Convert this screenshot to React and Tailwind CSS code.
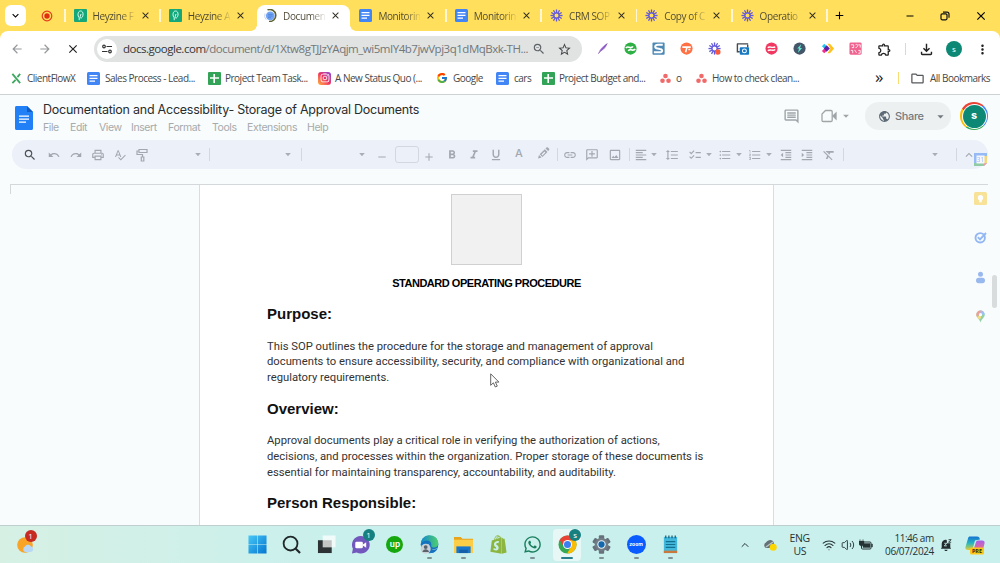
import React from 'react';
import {
    MdSearch, MdUndo, MdRedo, MdOutlinePrint, MdSpellcheck, MdAdd, MdRemove, MdFormatBold, MdFormatItalic,
    MdFormatUnderlined, MdLink, MdOutlineAddComment, MdOutlineImage, MdFormatAlignLeft, MdFormatLineSpacing,
    MdChecklist, MdFormatListBulleted, MdFormatListNumbered, MdFormatIndentDecrease, MdFormatIndentIncrease,
    MdFormatClear, MdArrowDropDown, MdKeyboardArrowUp, MdOutlineComment, MdPublic, MdArrowBack, MdArrowForward,
    MdClose, MdStarBorder, MdOutlineZoomOut, MdMoreVert, MdOutlineExtension, MdOutlineFileDownload,
    MdKeyboardArrowDown, MdOutlineFolder
} from 'react-icons/md';
import { FaInstagram, FaShopify, FaWhatsapp } from 'react-icons/fa';
import { FcGoogle } from 'react-icons/fc';
import { ChevronUp, Wifi, Volume2 } from 'lucide-react';

const DocsIcon = ({ className }) => (
    <svg viewBox="0 0 13 13" className={className}>
        <rect width="13" height="13" rx="1.5" fill="#4285f4" />
        <path d="M2.5 3.7h8M2.5 6.4h8M2.5 9.1h5.5" stroke="#fff" strokeWidth="1.3" />
    </svg>
);

const SheetsIcon = ({ className }) => (
    <svg viewBox="0 0 13 13" className={className}>
        <rect width="13" height="13" rx="1" fill="#33a457" />
        <path d="M2 6h9M6.2 2v9" stroke="#fff" strokeWidth="1.6" />
    </svg>
);

const HeyzineIcon = () => (
    <svg viewBox="0 0 13 13" className="size-[13px]">
        <rect width="13" height="13" rx="1" fill="#13a77a" />
        <path d="M5.2 11.2V8.7C3.4 7.2 3.5 2 6.6 2c3.2 0 3 5.6.9 6.9-.9.5-1.5 0-1.3-1.2L7 5" fill="none" stroke="#d8fff1" strokeWidth="1" />
    </svg>
);

const LoadingIcon = () => (
    <svg viewBox="0 0 13 13" className="size-[13px]">
        <circle cx="6.3" cy="6.8" r="4.4" fill="#72a4f3" />
        <path d="M4 5.4h4.6M4 7h4.6M4 8.6h3" stroke="#4a7fda" strokeWidth=".8" />
        <path d="M3.500.9A6 6 0 1 1 5 12.4" fill="none" stroke="#5c6130" strokeWidth="1.5" />
        <path d="M1 4.500A6 6 0 0 0 2.2 10.7" fill="none" stroke="#c8d4e8" strokeWidth="1" />
    </svg>
);

// Burst of twelve short rays, used by the Loom tabs and extension
const BurstIcon = ({ dot }) => (
    <svg viewBox="0 0 14 14" className="size-[13px]">
        {[0, 30, 60, 90, 120, 150, 180, 210, 240, 270, 300, 330].map(a => (
            <path key={a} d="M7 .5v4" stroke="#6258dc" strokeWidth="1.4" transform={`rotate(${a} 7 7)`} />
        ))}
        <circle cx="7" cy="7" r="2.8" fill="none" stroke="#6258dc" strokeWidth="1.2" />
        {dot && <circle cx="10.5" cy="10.7" r="2.9" fill="#f75b3b" />}
    </svg>
);

const AsanaIcon = () => (
    <svg viewBox="0 0 11 11" className="size-[11px]">
        <circle cx="5.5" cy="3" r="2.3" fill="#f06a6a" />
        <circle cx="2.5" cy="7.8" r="2.3" fill="#f06a6a" />
        <circle cx="8.5" cy="7.8" r="2.3" fill="#f06a6a" />
    </svg>
);

const tabs = [
    { icon: <HeyzineIcon />, title: 'Heyzine F' },
    { icon: <HeyzineIcon />, title: 'Heyzine A' },
    { icon: <LoadingIcon />, title: 'Documen', active: true },
    { icon: <DocsIcon className="size-[13px]" />, title: 'Monitorin' },
    { icon: <DocsIcon className="size-[13px]" />, title: 'Monitorin' },
    { icon: <BurstIcon />, title: 'CRM SOP' },
    { icon: <BurstIcon />, title: 'Copy of C' },
    { icon: <BurstIcon />, title: 'Operatio' }
];

function Tab({ icon, title, active, hideLine }) {
    return (
        <div className="relative flex h-[31px] w-[95.3px] shrink-0 items-center">
            {active && (
                <div className="absolute top-[5px] -right-[0.5px] bottom-0 left-[2.5px] rounded-t-lg bg-white">
                    <div className="absolute bottom-0 -left-1.5 size-1.5 bg-[radial-gradient(circle_at_0_0,#ffdf5c_5.5px,#fff_6px)]" />
                    <div className="absolute -right-1.5 bottom-0 size-1.5 bg-[radial-gradient(circle_at_100%_0,#ffdf5c_5.5px,#fff_6px)]" />
                </div>
            )}
            <div className={`h-[13px] w-[1.5px] ${hideLine ? '' : 'bg-[#fff6d5]'}`} />
            <div className="relative ml-2 w-[13px]">{icon}</div>
            <div className="relative ml-1.5 w-[42px] bg-linear-to-r from-[#4b4632] from-65% to-[#4b4632]/10 bg-clip-text pt-px text-[10px] tracking-[-0.4px] whitespace-nowrap text-transparent">
                {title}
            </div>
            <MdClose className="relative ml-[5px] size-[11px] text-[#2d2a1e]" />
        </div>
    );
}

function TabStrip() {
    return (
        <div className="flex h-[31px] items-center bg-[#ffdf5c]">
            <div className="ml-[5px] flex size-[21px] items-center justify-center rounded-md bg-white">
                <MdKeyboardArrowDown className="size-[13px]" />
            </div>
            <svg viewBox="0 0 12 12" className="ml-[15px] size-3">
                <circle cx="6" cy="6" r="4.8" fill="none" stroke="#e43d1c" strokeWidth="1.2" />
                <circle cx="6" cy="6" r="2.7" fill="#e02f12" />
            </svg>
            <div className="ml-[11px] flex">
                {tabs.map((tab, i) => (
                    <Tab key={i} {...tab} hideLine={i === 2 || i === 3} />
                ))}
            </div>
            <div className="h-[13px] w-[1.5px] bg-[#fff6d5]" />
            <MdAdd className="ml-[5px] size-[13px]" />
            <MdRemove className="ml-[58px] size-3" />
            <svg viewBox="0 0 10 10" className="ml-[24px] size-[10px]" fill="none" stroke="#111" strokeWidth="1.2">
                <rect x="1" y="2.8" width="6" height="6" rx="1.2" />
                <path d="M3 1.2h4c1.2 0 2 .8 2 2v3.6" />
            </svg>
            <MdClose className="ml-[24px] size-[14px]" />
        </div>
    );
}

const extensions = [
    <svg viewBox="0 0 14 14"><path d="M2.5 12.2C3.5 8 8 3.5 12 1.5c0 3-4 7.5-8 8.7z" fill="#a87bd8" /><path d="M2.5 12.5 12 1.5" stroke="#7042a8" strokeWidth=".8" /></svg>,
    <svg viewBox="0 0 14 14"><circle cx="7" cy="7" r="6.5" fill="#2fb045" /><path d="M2 6.5c2-3.6 5 2 7.5-1.8M4.5 9.5c2.5-3.7 5 1.5 7.5-2" fill="none" stroke="#fff" strokeWidth="1.7" /></svg>,
    <svg viewBox="0 0 14 14"><rect x=".5" y=".5" width="13" height="13" rx="1" fill="#4e89b5" /><path d="M11.5 3h-5C2.5 3 2.5 6.5 6 7l2.5.5C12 8 11.500 11 8 11H2" fill="none" stroke="#fff" strokeWidth="2.1" /></svg>,
    <svg viewBox="0 0 14 14"><circle cx="7" cy="7" r="6.5" fill="#ff7145" /><path d="M2.5 5.5h9M7.5 5.5 6 11M9 8h2" fill="none" stroke="#fff" strokeWidth="1.7" /></svg>,
    <BurstIcon dot />,
    <svg viewBox="0 0 14 14"><path d="M1 2h12M1.5 2v8.5H4M12.5 3v3" fill="none" stroke="#454b50" strokeWidth="1.5" /><rect x="4" y="5.5" width="10" height="8" rx="1" fill="#1678c2" /><circle cx="9" cy="9.5" r="2.1" fill="none" stroke="#fff" strokeWidth="1.1" /></svg>,
    <svg viewBox="0 0 14 14"><circle cx="7" cy="7" r="6.5" fill="#f23860" /><path d="M3 6.2c2-2.5 4 1 8-1M3 9.2c3-2 5 1 8-1.2" fill="none" stroke="#fff" strokeWidth="1.5" /></svg>,
    <svg viewBox="0 0 14 14"><circle cx="7" cy="7" r="6.5" fill="#45566b" /><path d="M8.8 2.5 4.5 7h2l-1.2 4.5 4.4-5H7.500z" fill="#5eead4" /></svg>,
    <svg viewBox="0 0 14 14"><path d="M1 4.5 3.5 2 6 4.5 3.5 7z" fill="#22c7ee" /><path d="M1 9.5 3.5 7 6 9.5 3.5 12z" fill="#f52c8b" /><path d="M7 2h2.5L14 7l-4.500 5H7l3-5z" fill="#ffc21c" /><path d="M6 3.5 9.500 7 6 10.5 3 7z" fill="#5b1fa8" /></svg>,
    <svg viewBox="0 0 14 14"><rect x=".5" y=".5" width="13" height="13" rx="1.5" fill="#f0628f" /><path d="M2 3h3v3H3M7 3c3-2 3 3 0 3M10 3h2v3M2 9h2v3M6 8.5l2 3M10 9h2v3h-2" fill="none" stroke="#fff" strokeWidth=".9" /></svg>
];

function AddressBar() {
    return (
        <div className="relative flex h-9 items-center rounded-t-lg bg-white">
            <MdArrowBack className="ml-[10px] size-[14px] text-[#96999b]" />
            <MdArrowForward className="ml-[14px] size-[14px] text-[#96999b]" />
            <MdClose className="ml-[14px] size-[14px] text-[#222]" />
            <div className="ml-[14px] flex h-[26px] w-[488px] items-center rounded-full bg-[#e0e3e2]">
                <div className="ml-[3px] flex size-5 items-center justify-center rounded-full bg-white">
                    <svg viewBox="0 0 12 12" className="size-3" fill="none" stroke="#333" strokeWidth="1.2">
                        <circle cx="3" cy="3.5" r="1.3" />
                        <path d="M5.5 3.5H11M1 8.5h5.5" />
                        <circle cx="9" cy="8.5" r="1.3" />
                    </svg>
                </div>
                <div className="w-[415px] pl-1.5 text-[11.5px] tracking-[-0.48px] whitespace-nowrap text-[#72777a]">
                    <span className="text-[#333638]">docs.google.com</span>/document/d/1Xtw8gTJJzYAqjm_wi5mIY4b7jwVpj3q1dMqBxk-TH...
                </div>
                <MdOutlineZoomOut className="size-[14px] text-[#5f6368]" />
                <MdStarBorder className="ml-[11px] size-[15px] text-[#44474a]" />
            </div>
            <div className="ml-[14px] flex gap-[15px] [&_svg]:size-[13.1px]">
                {extensions.map((ext, i) => <div key={i} className="w-[13.1px]">{ext}</div>)}
            </div>
            <MdOutlineExtension className="ml-[15px] size-[15px] text-[#222]" />
            <div className="ml-[13px] h-[12px] w-px bg-[#f7dc72]" />
            <MdOutlineFileDownload className="ml-3 size-[17px] text-[#222]" />
            <div className="ml-[11px] flex size-4 items-center justify-center rounded-full bg-[#0c8874] text-[8px] text-white">s</div>
            <MdMoreVert className="ml-[13px] size-[15px] text-[#222]" />
        </div>
    );
}

function Bookmark({ className, label, children, text }) {
    return (
        <div className={`flex shrink-0 items-center ${className}`}>
            {children}
            <span className={`whitespace-nowrap ${text}`}>{label}</span>
        </div>
    );
}

function BookmarksBar() {
    return (
        <div className="flex h-7 items-start border-b border-[#cdd2d2] bg-white pl-[11px] text-[10px] tracking-[-0.5px] text-[#45484a]">
            <div className="flex h-[22px] items-center">
                <Bookmark className="w-[76px]" text="ml-[5px]" label="ClientFlowX">
                    <svg viewBox="0 0 11 12" className="size-[11px]"><path d="m1 1 8.5 10M9.5 1l-3 3.5M4.500 7.500 1 11" stroke="#40a862" strokeWidth="2" /></svg>
                </Bookmark>
                <Bookmark className="w-[121px]" text="ml-[5px]" label="Sales Process - Lead..."><DocsIcon className="size-[13px]" /></Bookmark>
                <Bookmark className="w-[110px]" text="ml-1" label="Project Team Task..."><SheetsIcon className="size-[13px]" /></Bookmark>
                <Bookmark className="w-[118px]" text="ml-1" label="A New Status Quo (...">
                    <span className="rounded-[3px] bg-linear-to-tr from-[#ffb02e] via-[#ef2f62] to-[#8b32d9] p-[1.5px] text-white"><FaInstagram className="size-[10px]" /></span>
                </Bookmark>
                <Bookmark className="w-[60px]" text="ml-[5px]" label="Google"><FcGoogle className="size-[12px]" /></Bookmark>
                <Bookmark className="w-[46px]" text="ml-[5px]" label="cars"><DocsIcon className="size-[13px]" /></Bookmark>
                <Bookmark className="w-[118px]" text="ml-1" label="Project Budget and..."><SheetsIcon className="size-[13px]" /></Bookmark>
                <Bookmark className="w-[36px]" text="ml-[5px]" label="o"><AsanaIcon /></Bookmark>
                <Bookmark className="w-[179px]" text="ml-[5px]" label="How to check clean..."><AsanaIcon /></Bookmark>
                <span className="w-[23px] pb-[3px] text-[17px] leading-none text-[#222]">»</span>
                <div className="h-3 w-px bg-[#f7dc72]" />
                <MdOutlineFolder className="ml-[11px] size-[15px] text-[#55585a]" />
                <span className="ml-[5px] whitespace-nowrap">All Bookmarks</span>
            </div>
        </div>
    );
}

function Avatar() {
    return (
        <div className="flex size-[28px] items-center justify-center rounded-full bg-[conic-gradient(from_300deg,#ea4335_0_100deg,#4285f4_100deg_200deg,#34a853_200deg_275deg,#fbbc04_275deg_360deg)]">
            <div className="flex size-[25px] items-center justify-center rounded-full bg-white">
                <div className="flex size-[23px] items-center justify-center rounded-full bg-[#0c8874] pb-px text-[11px] font-bold text-white">s</div>
            </div>
        </div>
    );
}

function DocHeader() {
    return (
        <div className="flex h-[45px] pt-[5px] font-[Inter,sans-serif]">
            <svg viewBox="0 0 18 24" className="mt-[6px] ml-[15px] h-6 w-[18px]">
                <path d="M1.5 0H12l6 6v16.5c0 .9-.6 1.5-1.5 1.5h-15C.6 24 0 23.4 0 22.5v-21C0 .6.6 0 1.5 0z" fill="#2180f6" />
                <path d="M12 0l6 6h-6z" fill="#115cc5" />
                <path d="M4 10.2h10M4 13.2h10M4 16.2h7" stroke="#fff" strokeWidth="1.3" />
            </svg>
            <div className="ml-[10px] w-[736px]">
                <div className="h-[19px] text-[12.5px] leading-[19px] tracking-[-0.24px] whitespace-nowrap text-[#2a2d2e]">
                    Documentation and Accessibility- Storage of Approval Documents
                </div>
                <div className="flex h-[18px] items-center text-[10.5px] tracking-[-0.4px] text-[#a6aaac]">
                    <span className="w-[27px]">File</span>
                    <span className="w-[29px]">Edit</span>
                    <span className="w-[32px]">View</span>
                    <span className="w-[37px]">Insert</span>
                    <span className="w-[44px]">Format</span>
                    <span className="w-[35px]">Tools</span>
                    <span className="w-[60px]">Extensions</span>
                    <span>Help</span>
                </div>
            </div>
            <div className="flex h-8 items-center">
                <MdOutlineComment className="ml-1 size-[17px] text-[#9fa4a7]" />
                <svg viewBox="0 0 16 14" className="ml-[21px] h-[14px] w-4" fill="none" stroke="#a0a5a8" strokeWidth="1.3">
                    <path d="M4.5 1.5H10c.8 0 1.2.4 1.2 1.2v8.6c0 .8-.4 1.2-1.2 1.2H2.2c-.8 0-1.2-.4-1.2-1.2V5z" />
                    <path d="M12 7l3-3v6z" fill="#a0a5a8" />
                </svg>
                <MdArrowDropDown className="ml-0.5 size-[14px] text-[#a0a5a8]" />
                <div className="ml-[12px] flex h-7 w-[86px] items-center rounded-full bg-[#edf0f0] text-[#727a80]">
                    <MdPublic className="ml-[13px] size-[13px] text-[#5d6b78]" />
                    <span className="ml-1 w-[38px] text-[11px] font-medium tracking-[-0.35px]">Share</span>
                    <MdArrowDropDown className="size-[15px]" />
                </div>
                <div className="ml-[9px]"><Avatar /></div>
            </div>
        </div>
    );
}

function Caret({ className }) {
    return <div className={`h-[3.5px] w-2 bg-[#a9adb5] [clip-path:polygon(12%_0,88%_0,50%_100%)] ${className}`} />;
}

const Line = ({ className }) => <div className={`h-[13px] w-px bg-[#d3d8df] ${className}`} />;

function Toolbar() {
    return (
        <div className="mx-3 flex h-[29px] items-center rounded-full bg-[#ecf0f9] pl-[11px] text-[#a3a8af] [&>*]:shrink-0 [&>svg]:size-[14px]">
            <MdSearch className="text-[#4c5054]" />
            <MdUndo className="ml-[10px] scale-90" />
            <MdRedo className="ml-2 scale-90" />
            <MdOutlinePrint className="ml-2" />
            <MdSpellcheck className="ml-2 scale-90" />
            <svg viewBox="0 0 14 14" className="ml-2" fill="none" stroke="currentColor" strokeWidth="1.2">
                <path d="M4 1.5h8v3H4zM4 3H2v3.5h5.5V9M6.3 9h2.5v4H6.3z" />
            </svg>
            <Caret className="ml-[45px]" />
            <Line className="ml-[7px]" />
            <Caret className="ml-[74px]" />
            <Line className="ml-[9px]" />
            <Caret className="ml-[56px]" />
            <MdRemove className="mt-1 ml-[9px] scale-90" />
            <div className="ml-1.5 h-[17px] w-6 rounded-[3px] border border-[#d3d7de]" />
            <MdAdd className="mt-1 ml-[3px] scale-90" />
            <MdFormatBold className="ml-[9px]" />
            <MdFormatItalic className="ml-2" />
            <MdFormatUnderlined className="ml-2" />
            <div className="ml-[9px] w-[14px] pb-0.5 text-center font-[Inter,sans-serif] text-[11px] leading-none font-medium">A</div>
            <svg viewBox="0 0 14 14" className="-mt-1 ml-[10px]" fill="currentColor">
                <path d="M2 12.500 3 9l2.600 2.600zM3.700 8.300 8.800 3.200l2.700 2.700-5.100 5.100zM9.500 2.500l1-1c.4-.4 1-.4 1.400 0l1.200 1.300c.4.4.4 1 0 1.300l-1 1zM5.500 8.600l.9.900 3-3-.9-.9z" fillRule="evenodd" />
            </svg>
            <Line className="ml-[7px]" />
            <MdLink className="ml-[5px]" />
            <MdOutlineAddComment className="ml-2 -scale-x-100" />
            <MdOutlineImage className="ml-[9px]" />
            <Line className="ml-[7px]" />
            <MdFormatAlignLeft className="ml-1" />
            <Caret className="ml-0.5" />
            <MdFormatLineSpacing className="ml-[7px]" />
            <MdChecklist className="ml-[9px]" />
            <Caret className="ml-[3px]" />
            <MdFormatListBulleted className="ml-[5px]" />
            <Caret className="ml-[3px]" />
            <MdFormatListNumbered className="ml-[5px]" />
            <Caret className="ml-[3px]" />
            <MdFormatIndentDecrease className="ml-1.5" />
            <MdFormatIndentIncrease className="ml-[7px]" />
            <MdFormatClear className="ml-2" />
            <Line className="ml-[7px]" />
            <Caret className="ml-[87px]" />
            <Line className="ml-[17px]" />
            <MdKeyboardArrowUp className="ml-[5px]" />
        </div>
    );
}

function Section({ title, lines }) {
    return (
        <div className="h-[94.7px] pt-[12px]">
            <h2 className="h-5 font-['Liberation_Sans',sans-serif] text-[15px] leading-5 font-bold text-[#111]">{title}</h2>
            <div className="mt-[14.5px] font-[Roboto,sans-serif] text-[11.25px] leading-[15.7px] whitespace-nowrap">
                {lines.map(line => <div key={line}>{line}</div>)}
            </div>
        </div>
    );
}

function Page() {
    return (
        <div className="h-full w-[575px] overflow-hidden border-x border-[#d9dddf] bg-white px-[67px] pt-[9px] text-[#333]">
            <div className="ml-[184px] size-[71px] border border-[#d0d0d0] bg-[#f1f1f1]" />
            <div className="mt-[10px] mb-px text-center font-['Liberation_Sans',sans-serif] text-[11px] leading-4 font-bold tracking-[-0.47px] whitespace-nowrap text-black">
                STANDARD OPERATING PROCEDURE
            </div>
            <Section
                title="Purpose:"
                lines={[
                    'This SOP outlines the procedure for the storage and management of approval',
                    'documents to ensure accessibility, security, and compliance with organizational and',
                    'regulatory requirements.'
                ]}
            />
            <Section
                title="Overview:"
                lines={[
                    'Approval documents play a critical role in verifying the authorization of actions,',
                    'decisions, and processes within the organization. Proper storage of these documents is',
                    'essential for maintaining transparency, accountability, and auditability.'
                ]}
            />
            <Section title="Person Responsible:" lines={[]} />
        </div>
    );
}

function SidePanel() {
    return (
        <div className="absolute top-[58px] left-[974px] flex flex-col gap-[26.2px] opacity-50 [&>svg]:size-[13px]">
            <svg viewBox="0 0 13 13">
                <path d="M0 0h13v10l-3 3H0z" fill="#4285f4" />
                <path d="M10 3h3v7h-3z" fill="#fbbc04" />
                <path d="M0 10h10v3H0z" fill="#34a853" />
                <path d="M10 10h3l-3 3z" fill="#ea4335" />
                <path d="M2.5 2.5h8v8h-8z" fill="#fff" />
                <text x="6.5" y="9" textAnchor="middle" fontSize="6.5" fill="#4285f4">31</text>
            </svg>
            <svg viewBox="0 0 13 13">
                <rect width="13" height="13" rx="1.5" fill="#f9c933" />
                <circle cx="6.5" cy="5.7" r="2.7" fill="#fff" />
                <path d="M5.2 8h2.6v2.3H5.2z" fill="#fff" />
            </svg>
            <svg viewBox="0 0 13 13" fill="none" stroke="#2f74eb" strokeWidth="1.9">
                <circle cx="6.2" cy="6.8" r="4.7" />
                <path d="M3.8 6.2 6 8.4 12 2" />
            </svg>
            <svg viewBox="0 0 13 13" fill="#3c76e0">
                <circle cx="6.5" cy="3.2" r="2.5" />
                <rect x="2" y="6.7" width="9" height="5.5" rx="2.7" />
            </svg>
            <svg viewBox="0 0 13 13">
                <path d="M6.5.5a4.2 4.2 0 0 0-4.200 4.200c0 3.200 3.300 4 4.200 7.800.9-3.800 4.200-4.600 4.200-7.800A4.200 4.200 0 0 0 6.500.5z" fill="#34a853" />
                <path d="M6.500.5a4.200 4.200 0 0 0-4.200 4.200l.5 2L9.500 1.700A4.200 4.200 0 0 0 6.500.5z" fill="#ea4335" />
                <path d="M6.500.5 9.500 1.700a4.200 4.200 0 0 1 1.200 3L6.500 4.700z" fill="#4285f4" />
                <path d="M3 7l3.500-2.300L7 8 5 9.500z" fill="#fbbc04" />
                <circle cx="6.5" cy="4.7" r="1.6" fill="#fff" />
            </svg>
        </div>
    );
}

const ChromeIcon = () => (
    <svg viewBox="0 0 20 20">
        <circle cx="10" cy="10" r="9.5" fill="#34a853" />
        <path d="M10 10 1.8 5.2A9.5 9.5 0 0 1 18.2 5.2z" fill="#ea4335" />
        <path d="M10 5.5h8.4A9.500 9.500 0 0 1 9.500 19.500L14 12z" fill="#fbbc04" />
        <path d="M1.8 5.2 6 12l4-7z" fill="#ea4335" />
        <circle cx="10" cy="10" r="4.7" fill="#fff" />
        <circle cx="10" cy="10" r="3.7" fill="#3c7ff0" />
    </svg>
);

const WindowsIcon = () => (
    <svg viewBox="0 0 20 20">
        <defs>
            <linearGradient id="win" x2="1" y2="1"><stop stopColor="#45c8f7" /><stop offset="1" stopColor="#0675d0" /></linearGradient>
        </defs>
        <path d="M.5.5h9.200v9.200H.5zM10.300.5h9.200v9.200h-9.200zM.5 10.300h9.200v9.200H.5zM10.300 10.300h9.200v9.200h-9.200z" fill="url(#win)" />
    </svg>
);

const EdgeIcon = () => (
    <svg viewBox="0 0 20 20">
        <defs>
            <linearGradient id="edge" x2="1"><stop stopColor="#1388cf" /><stop offset="1" stopColor="#4fd06c" /></linearGradient>
        </defs>
        <circle cx="10" cy="10" r="9.3" fill="#1573bd" />
        <path d="M1 9C2-3 19-2 19.300 9c0 5-7 5-7.500 2.500C13 5 5 4 1 9z" fill="url(#edge)" />
        <path d="M10 9c-3 4 2 8 8 5-2 4-6 5-9 4-3-2-2-7 1-9z" fill="#d5edf4" />
        <path d="M10.500 12c1 3.500 5 4 8 2.500-2 4-6 5-9 4z" fill="#1573bd" />
        <circle cx="6" cy="14.500" r="5.300" fill="#c9d0d6" />
        <circle cx="6" cy="12.700" r="2" fill="#59616a" />
        <path d="M2.500 18c1-4 6-4 7 0z" fill="#59616a" />
    </svg>
);

const SettingsIcon = () => (
    <svg viewBox="0 0 20 20">
        {[0, 60, 120].map(a => (
            <rect key={a} x="7.2" y=".3" width="5.6" height="19.4" rx="1" fill="#66717b" transform={`rotate(${a} 10 10)`} />
        ))}
        <circle cx="10" cy="10" r="7" fill="#727d86" />
        <circle cx="10" cy="10" r="4.4" fill="#e8f4f8" />
        <circle cx="10" cy="10" r="3.3" fill="#1668ad" />
    </svg>
);

const apps = [
    { icon: <WindowsIcon /> },
    { icon: <svg viewBox="0 0 20 20" fill="none" stroke="#20282a" strokeWidth="1.9"><circle cx="9" cy="9" r="7.3" /><path d="m14.200 14.200 4.800 4.800" strokeWidth="2.3" /></svg> },
    { icon: <svg viewBox="0 0 20 20"><path d="M1 5.500h14.500V19H1z" fill="#2d3335" /><path d="M6 .5h13.500V13H6z" fill="#fff" opacity=".72" /></svg> },
    { icon: <svg viewBox="0 0 20 20"><path d="M10 1a9.300 9.300 0 1 1-4 17.500L1 19.500l1-5A9.300 9.300 0 0 1 10 1z" fill="#7257bc" /><rect x="4.5" y="7" width="8" height="7" rx="1.5" fill="#fff" /><path d="m12.500 10 3.500-2.500v6L12.500 11z" fill="#fff" /></svg>, badge: '1' },
    { icon: <div className="flex size-[17px] items-center justify-center rounded-full bg-[#16a60d] pb-0.5 font-[Lato,sans-serif] text-[9px] leading-none font-bold text-white">up</div> },
    { icon: <EdgeIcon />, running: true },
    { icon: <svg viewBox="0 0 20 20"><path d="M0 2h7l2 2h11v5H0z" fill="#e8a51c" /><path d="M0 5h20v14H0z" fill="#fcce48" /><path d="M2.500 12h15v7h-15z" fill="#1877cc" /><path d="M5.500 15.500h9v3.500h-9z" fill="#155fa8" /></svg>, running: true },
    { icon: <FaShopify className="text-[#8cb63f]" /> },
    { icon: <FaWhatsapp className="text-[#197e5c]" />, running: true },
    { icon: <ChromeIcon />, badge: 's', active: true },
    { icon: <SettingsIcon />, running: true },
    { icon: <div className="flex size-[19px] items-center justify-center rounded-full bg-[#0b5cff] font-[Inter,sans-serif] text-[5px] leading-none font-bold text-white">zoom</div>, running: true },
    { icon: <svg viewBox="0 0 20 20"><path d="M3 2h14v17H3z" fill="#42b8dc" /><path d="M3 16.500h14V19H3z" fill="#c87a3c" /><path d="M5 7h10M5 10h10M5 13h10" stroke="#13718f" strokeWidth="1.2" /><path d="M5 .5v3M8.300.5v3M11.600.5v3M15 .5v3" stroke="#15607b" strokeWidth="1.3" /></svg>, running: true }
];

function TaskApp({ icon, badge, running, active }) {
    return (
        <div className="flex h-full w-[34.45px] shrink-0 items-center justify-center">
            <div className={`relative flex h-[32px] w-7 items-center justify-center rounded [&_svg]:size-[19px] ${active ? 'bg-[#e6f7f6]' : ''}`}>
                {icon}
                {badge && (
                    <span className="absolute top-0 right-0 flex size-[12px] items-center justify-center rounded-full bg-[#167f80] text-[8px] leading-none text-white">{badge}</span>
                )}
                {running && <span className="absolute bottom-[1.5px] h-[2.5px] w-[5px] rounded-full bg-[#7f9395]" />}
                {active && <span className="absolute bottom-[1.5px] h-[2.5px] w-3 rounded-full bg-[#267f8a]" />}
            </div>
        </div>
    );
}

function Taskbar() {
    return (
        <div className="flex h-[38px] items-center border-t border-[#bfcfd0] bg-linear-to-r from-[#d6f0e4] via-[#c9f0ed] via-35% to-[#c9f0ed] text-[#263335]">
            <div className="relative ml-[17px] w-[223px] shrink-0">
                <svg viewBox="0 0 20 20" className="size-5">
                    <circle cx="8" cy="10" r="7.8" fill="#f7a427" />
                    <path d="M8 17a3 3 0 0 1 0-5.500c1-2.500 5-2.500 6 0a2.800 2.800 0 0 1 0 5.500z" fill="#b8d8f6" />
                </svg>
                <span className="absolute -top-[4.5px] left-[7.5px] flex size-[12px] items-center justify-center rounded-full bg-[#c62a20] text-[8px] leading-none text-white">1</span>
            </div>
            <div className="flex h-full">
                {apps.map((app, i) => <TaskApp key={i} {...app} />)}
            </div>
            <ChevronUp className="ml-[51px] size-3 shrink-0" />
            <svg viewBox="0 0 14 12" className="ml-[12px] h-3 w-[14px] shrink-0">
                <path d="M3 9a3 3 0 0 1 0-5.500C5 0 10 0 11 4v5z" fill="#667175" />
                <path d="M3 8 10 3" stroke="#b7c6c8" strokeWidth="1.5" />
                <circle cx="10.2" cy="8.2" r="3.5" fill="#fcd600" />
            </svg>
            <div className="ml-[12px] w-[22px] shrink-0 text-center text-[10.5px] leading-[12.5px] tracking-[-0.4px]">ENG<br />US</div>
            <Wifi className="ml-[11px] size-[14px] shrink-0" strokeWidth={1.8} />
            <Volume2 className="ml-[5px] size-[14px] shrink-0" strokeWidth={1.6} />
            <svg viewBox="0 0 14 12" className="ml-1 h-3 w-[14px] shrink-0">
                <rect x="2.5" y="3" width="9.5" height="7" rx="1" fill="none" stroke="#263335" />
                <path d="M4 4.500h7v4H4zM12.500 5h1v3h-1zM0 2h5v3.500l-2.500 2L0 5.500zM1 0v2M4 0v2" fill="#263335" stroke="#263335" strokeWidth=".4" />
            </svg>
            <div className="ml-1 w-[57px] shrink-0 text-right text-[10px] leading-[12.5px] tracking-[-0.45px] whitespace-nowrap">11:46 am<br />06/07/2024</div>
            <svg viewBox="0 0 14 14" className="ml-1.5 size-3 shrink-0">
                <path d="M2 10V5.500C2 1 8 0 8 2v3h4v5l1 1.500H1zM5 12.500h4c-.5 2-3.500 2-4 0z" fill="#222b2d" />
                <path d="M5 5h3L5 8h3" fill="none" stroke="#c9f0ed" />
                <path d="M10 .8h3l-3 3h3" fill="none" stroke="#222b2d" />
            </svg>
            <svg viewBox="0 0 20 20" className="ml-[13px] size-5 shrink-0">
                <defs>
                    <linearGradient id="coA" x2="0" y2="1"><stop stopColor="#1572d3" /><stop offset=".5" stopColor="#26b7be" /><stop offset="1" stopColor="#e3cf35" /></linearGradient>
                    <linearGradient id="coB" x2="0" y2="1"><stop stopColor="#a95ce8" /><stop offset="1" stopColor="#f4777a" /></linearGradient>
                </defs>
                <path d="M5 1.500h7c2 0 2.500 1 3 3l-5 1-2 7c-.5 2-1.500 2.500-3 2.500H3c-2 0-3-1-2.500-3L3 3.500C3.300 2 4 1.500 5 1.500z" fill="url(#coA)" />
                <path d="M13 5.500h4c2 0 3 1 2.500 3l-2 8H8l2.500-8c.5-2 1-3 2.500-3z" fill="url(#coB)" />
                <rect x="5" y="12.5" width="14" height="7" rx="1.5" fill="#fbc719" />
                <text x="12" y="18" textAnchor="middle" fontSize="5.5" fontWeight="bold" fill="#322a12">PRE</text>
            </svg>
        </div>
    );
}

export default function App() {
    return (
        <div className="flex h-[563px] w-[1000px] flex-col overflow-hidden bg-white font-['Open_Sans',sans-serif]">
            <div className="bg-[#ffdf5c]">
                <TabStrip />
                <AddressBar />
            </div>
            <BookmarksBar />
            <div className="relative flex min-h-0 flex-1 flex-col bg-[#f8fcfd]">
                <DocHeader />
                <Toolbar />
                <div className="mt-[15px] ml-[10px] flex min-h-0 w-[978px] flex-1 border-t border-[#d4d8da] pl-[189px]">
                    <Page />
                </div>
                <div className="absolute top-[89px] left-[10px] h-[10px] w-px bg-[#d4d8da]" />
                <SidePanel />
                <div className="absolute top-[180px] right-[3px] h-[33px] w-[5px] rounded-full bg-[#d9dcdd]" />
                <svg viewBox="0 0 10 15" className="absolute top-[278px] left-[490px] h-[15px] w-[10px]">
                    <path d="M.7.8v11.500l2.700-2.500 1.900 4.200 2-.9-1.900-4h3.500z" fill="#fff" stroke="#555" strokeWidth=".9" />
                </svg>
            </div>
            <Taskbar />
        </div>
    );
}
